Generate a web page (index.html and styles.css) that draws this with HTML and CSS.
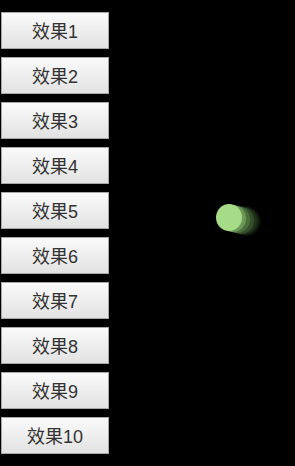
FILE: index.html
```html
<!DOCTYPE html>
<html lang="zh">

<head>
    <meta charset="UTF-8">
    <meta name="viewport" content="width=device-width, initial-scale=1.0">
    <title>小球效果</title>
    <link rel="stylesheet" href="styles.css">
</head>

<body>
    <div class="btns">
        <button class="btn">效果1</button>
        <button class="btn">效果2</button>
        <button class="btn">效果3</button>
        <button class="btn">效果4</button>
        <button class="btn">效果5</button>
        <button class="btn">效果6</button>
        <button class="btn">效果7</button>
        <button class="btn">效果8</button>
        <button class="btn">效果9</button>
        <button class="btn">效果10</button>
    </div>

    <div class="stage">
        <div class="ball b5"></div>
        <div class="ball b4"></div>
        <div class="ball b3"></div>
        <div class="ball b2"></div>
        <div class="ball b1"></div>
        <div class="ball"></div>
    </div>
</body>

</html>
```

FILE: styles.css
```css
body {
    margin: 0;
    background: #000;
    font-family: "Liberation Sans", "Noto Sans CJK SC", sans-serif;
}

.btns {
    display: flex;
    flex-direction: column;
    gap: 8px;
    padding: 12px 0 0 1px;
}

.btn {
    width: 108px;
    height: 37px;
    margin: 0;
    padding: 0 0 2px;
    border: 1px solid #a8a8a8;
    background: linear-gradient(#fafafa, #e2e2e2);
    color: #333;
    font-family: "Liberation Sans", "Noto Sans CJK SC", sans-serif;
    font-size: 18px;
}

.stage {
    position: absolute;
    left: 0;
    top: 0;
}

.ball {
    position: absolute;
    left: 216px;
    top: 204px;
    width: 26px;
    height: 27px;
    border-radius: 50%;
    background: #a6dc88;
}

.b1 {
    left: 220px;
    top: 205px;
    background: #6e9a58;
    filter: blur(0.5px);
}

.b2 {
    left: 224px;
    top: 206px;
    background: #4c6e3c;
    filter: blur(0.6px);
}

.b3 {
    left: 228px;
    top: 207px;
    background: #34502a;
    filter: blur(0.7px);
}

.b4 {
    left: 231px;
    top: 207px;
    background: #22361c;
    filter: blur(0.8px);
}

.b5 {
    left: 234px;
    top: 208px;
    background: #141f10;
    filter: blur(1px);
}
```
